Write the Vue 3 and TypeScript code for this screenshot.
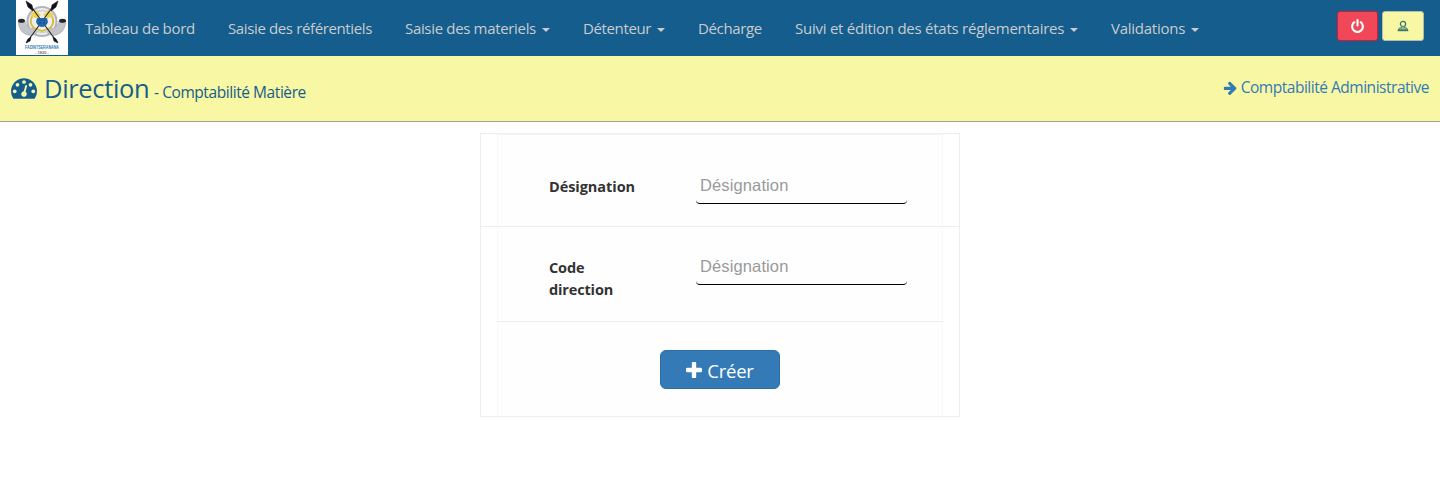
<script setup lang="ts">
interface NavItem { label: string; menu: boolean; key: string }
interface Field { id: string; label: string; placeholder: string }

const navItems: NavItem[] = [
  { label: 'Tableau de bord', menu: false, key: 'dashboard' },
  { label: 'Saisie des référentiels', menu: false, key: 'refs' },
  { label: 'Saisie des materiels', menu: true, key: 'materials' },
  { label: 'Détenteur', menu: true, key: 'holder' },
  { label: 'Décharge', menu: false, key: 'release' },
  { label: 'Suivi et édition des états réglementaires', menu: true, key: 'tracking' },
  { label: 'Validations', menu: true, key: 'validations' },
]

const fields: Field[] = [
  { id: 'designation', label: 'Désignation', placeholder: 'Désignation' },
  { id: 'code', label: 'Code direction', placeholder: 'Désignation' },
]
</script>

<template>
  <div class="page">
    <nav class="navbar">
      <svg class="logo" viewBox="0 0 52 55" aria-hidden="true">
        <rect width="52" height="55" fill="#fff" />
        <circle cx="26" cy="21.500" r="14.500" fill="#eeeef0" stroke="#b4b5b9" stroke-width="2.200" />
        <circle cx="26" cy="21.500" r="11" fill="none" stroke="#cfd0d4" stroke-width="1.500" />
        <path d="M2 21q1 13 12 14.500 4 0 7-3l-3-4q-7 1-9-7.500zM50 21q-1 13-12 14.500-4 0-7-3l3-4q7 1 9-7.500z" fill="#c3c4c8" stroke="#a4a5aa" stroke-width=".5" />
        <ellipse cx="5.500" cy="20.800" rx="3.500" ry="2" fill="#25262a" />
        <ellipse cx="46.500" cy="20.800" rx="3.500" ry="2" fill="#25262a" />
        <path d="M17 15q-5 7 1 13l8 3 8-3q6-6 1-13" fill="none" stroke="#d7bd3c" stroke-width="1.800" />
        <path d="M15 14l5-4 5 5-4 3-5-1zM37 14l-5-4-5 5 4 3 5-1z" fill="#ecd24d" />
        <path d="M11 42 38 5M41 42 14 5" stroke="#25262a" stroke-width="1.100" />
        <path d="m10 1 2 6 5 4-1-6zM42 1l-2 6-5 4 1-6zM10 43l2-4 3-2-1 4zM42 43l-2-4-3-2 1 4z" fill="#111216" stroke="#111216" stroke-width=".6" />
        <path d="M21 18h10l1 4q-2 5-6 5t-6-5z" fill="#2370ad" />
        <path d="M21 20h10M21 23h10M24 18v8M28 18v8" stroke="#174c80" stroke-width=".6" />
        <text x="26" y="48.700" text-anchor="middle" textLength="34" lengthAdjust="spacingAndGlyphs" class="logo-name">FADINTSERANANA</text>
        <text x="26" y="53.800" text-anchor="middle" class="logo-year">- 1820 -</text>
      </svg>
      <ul class="menu">
        <li v-for="item in navItems" :key="item.key" :class="['item', item.key]">
          <span class="item-text">{{ item.label }}</span>
          <span v-if="item.menu" class="caret" />
        </li>
      </ul>
      <div class="actions">
        <button class="btn power" aria-label="Déconnexion">
          <svg viewBox="0 0 1792 1792" width="15" height="15"><path fill="currentColor" d="M1664 896q0 156-61 298t-164 245-245 164-298 61-298-61-245-164-164-245-61-298q0-182 80.500-343t226.500-270q43-32 95.500-25t83.500 50q32 42 24.500 94.500t-49.500 84.500q-98 74-151.500 181t-53.500 228q0 104 40.500 198.500t109.500 163.500 163.500 109.500 198.500 40.500 198.500-40.500 163.500-109.500 109.500-163.500 40.500-198.500q0-121-53.500-228t-151.500-181q-42-32-49.500-84.500t24.500-94.500q31-43 84-50t95 25q146 109 226.500 270t80.500 343zm-640-768v640q0 52-38 90t-90 38-90-38-38-90v-640q0-52 38-90t90-38 90 38 38 90z" /></svg>
        </button>
        <button class="btn user" aria-label="Profil">
          <svg viewBox="0 0 12 12" width="12" height="12" fill="none" stroke="#3c7272"><circle cx="6" cy="4" r="2.600" stroke-width="1.200" /><path d="M4.500 6.500v1L2 8.300 1.300 10h9.400L10 8.300 7.500 7.500v-1" fill="#9bb68c" stroke-width=".8" /><path d="M.7 10.500h10.600" stroke-width="1.400" /></svg>
        </button>
      </div>
    </nav>

    <header class="heading">
      <h1 class="title">
        <svg class="gauge" viewBox="0 256 1792 1408" width="26" height="21">
          <path fill="#155d8c" d="M1792 1152q0 261-141 483-19 29-54 29h-1402q-35 0-54-29-141-221-141-483 0-182 71-348t191-286 286-191 348-71 348 71 286 191 191 286 71 348z" />
          <g fill="#f8f7a4"><circle cx="256" cy="1152" r="128" /><circle cx="448" cy="704" r="128" /><circle cx="896" cy="512" r="128" /><circle cx="1344" cy="704" r="128" /><circle cx="1536" cy="1152" r="128" /><path d="M1004 1185l101-382q6-26-7.500-48.500t-38.500-29.500-48 6.500-30 39.500l-101 382q-60 5-107 43.500t-63 98.500q-20 77 20 146t117 89 146-20 89-117q16-60-6-117t-72-91z" /></g>
        </svg>
        <span class="title-main">Direction</span>
        <small class="title-sub">- Comptabilité Matière</small>
      </h1>
      <a class="switch">
        <svg viewBox="64 90 1544 1650" width="14" height="14"><path fill="currentColor" d="M1600 960q0 54-37 91l-651 651q-39 37-91 37-51 0-90-37l-75-75q-38-38-38-91t38-91l293-293h-704q-52 0-84.500-37.500t-32.500-90.500v-128q0-53 32.500-90.500t84.500-37.500h704l-293-294q-38-36-38-90t38-90l75-75q38-38 90-38 53 0 91 38l651 651q37 35 37 90z" /></svg>
        <span>Comptabilité Administrative</span>
      </a>
    </header>

    <form class="panel" @submit.prevent>
      <div v-for="field in fields" :key="field.id" :class="['row', field.id]">
        <div class="row-inner">
          <label class="label" :for="field.id">{{ field.label }}</label>
          <input :id="field.id" class="input" type="text" :placeholder="field.placeholder">
        </div>
      </div>
      <div class="footer">
        <button class="create">
          <svg viewBox="192 128 1408 1408" width="16" height="16"><path fill="currentColor" d="M1600 736v192q0 40-28 68t-68 28h-416v416q0 40-28 68t-68 28h-192q-40 0-68-28t-28-68v-416h-416q-40 0-68-28t-28-68v-192q0-40 28-68t68-28h416v-416q0-40 28-68t68-28h192q40 0 68 28t28 68v416h416q40 0 68 28t28 68z" /></svg>
          <span class="create-text">Créer</span>
        </button>
      </div>
    </form>
  </div>
</template>

<style>
body { margin: 0; background: #fff; }
</style>

<style scoped>
* { box-sizing: border-box; }
.page { height: 492px; overflow: hidden; font-family: "Open Sans", "Noto Sans", sans-serif; color: #333; }
.navbar { display: flex; height: 56px; padding-left: 16px; padding-right: 16px; background: #155d8c; }
.logo { width: 52px; height: 55px; flex: none; }
.logo-name { font: bold 4.500px "Liberation Sans", sans-serif; fill: #2f7db0; }
.logo-year { font: bold 4px "Liberation Sans", sans-serif; fill: #7b6d65; }
.menu { display: flex; margin: 0; padding: 0 0 0 17px; list-style: none; }
.item { display: flex; flex: none; align-items: flex-start; padding-top: 18px; font-size: 15px; line-height: 21px; color: #c8ccd0; white-space: nowrap; }
.caret { margin: 10px 0 0 6px; border: 4px solid transparent; border-top-color: #c8ccd0; border-bottom: 0; }
.dashboard { width: 143px; letter-spacing: -0.300px; }
.refs { width: 177px; letter-spacing: -0.370px; }
.materials { width: 178px; letter-spacing: -0.330px; }
.holder { width: 115px; letter-spacing: -0.370px; }
.release { width: 97px; letter-spacing: -0.370px; }
.tracking { width: 316px; letter-spacing: -0.250px; }
.validations { width: 90px; letter-spacing: -0.250px; }
.actions { display: flex; gap: 4px; margin-left: auto; padding-top: 11px; }
.btn { display: flex; align-items: center; justify-content: center; height: 30px; padding: 0; border: 1px solid; border-radius: 3px; }
.power { width: 41px; color: #fff; background: #f04759; border-color: #c91f38; }
.user { width: 42px; background: #f8f7a4; border-color: #b6bca7; }
.heading { display: flex; justify-content: space-between; height: 66px; padding: 0 11px; background: #f8f7a4; border-bottom: 1px solid #a3a39b; color: #155d8c; }
.title { display: flex; align-items: baseline; margin: 0; padding-top: 14px; font-weight: 400; line-height: 36px; white-space: nowrap; }
.gauge { align-self: flex-start; margin: 8px 7px 0 0; }
.title-main { width: 110px; font-size: 25.500px; letter-spacing: -0.350px; }
.title-sub { font-size: 15.500px; letter-spacing: -0.430px; }
.switch { display: flex; width: 206px; align-items: center; align-self: flex-start; gap: 4px; margin-top: 20px; color: #337ab7; font-size: 15.500px; line-height: 23px; letter-spacing: -0.480px; white-space: nowrap; }
.panel { width: 480px; height: 284px; margin: 11px auto 0; border: 1px solid #eee; }
.row-inner { display: flex; height: 100%; margin: 0 16px; padding: 42px 35px 0 51px; border: solid #f9f9f9; border-width: 0 1px; background: #fefefe; }
.designation { height: 93px; border-bottom: 1px solid #eee; }
.designation .row-inner { border-top: 1px solid #f5f5f5; padding-top: 41px; }
.code { height: 95px; }
.code .row-inner { padding-top: 30px; border-bottom: 1px solid #eee; }
.label { width: 90px; margin-right: 59px; font-size: 14.500px; letter-spacing: -0.050px; font-weight: 700; line-height: 22px; }
.code .label { letter-spacing: -0.150px; }
.input { width: 211px; height: 36px; margin-top: -8px; padding: 0 4px; border: 0 solid #000; border-bottom-width: 1px; border-radius: 4px; background: transparent; font-family: "Liberation Sans", Arial, sans-serif; font-size: 16.500px; letter-spacing: 0.120px; outline: none; }
.input::placeholder { color: #999; opacity: 1; }
.footer { display: flex; height: 94px; margin: 0 16px; align-items: flex-start; justify-content: center; padding-top: 28px; border: solid #f9f9f9; border-width: 0 1px; background: #fefefe; }
.create { display: flex; width: 120px; height: 39px; align-items: center; justify-content: center; gap: 5px; padding: 0; color: #fff; background: #337ab7; border: 1px solid #2e6da4; border-radius: 6px; font-family: inherit; font-size: 18.500px; letter-spacing: -0.250px; line-height: 27px; }
.create-text { padding-top: 2px; }
</style>
